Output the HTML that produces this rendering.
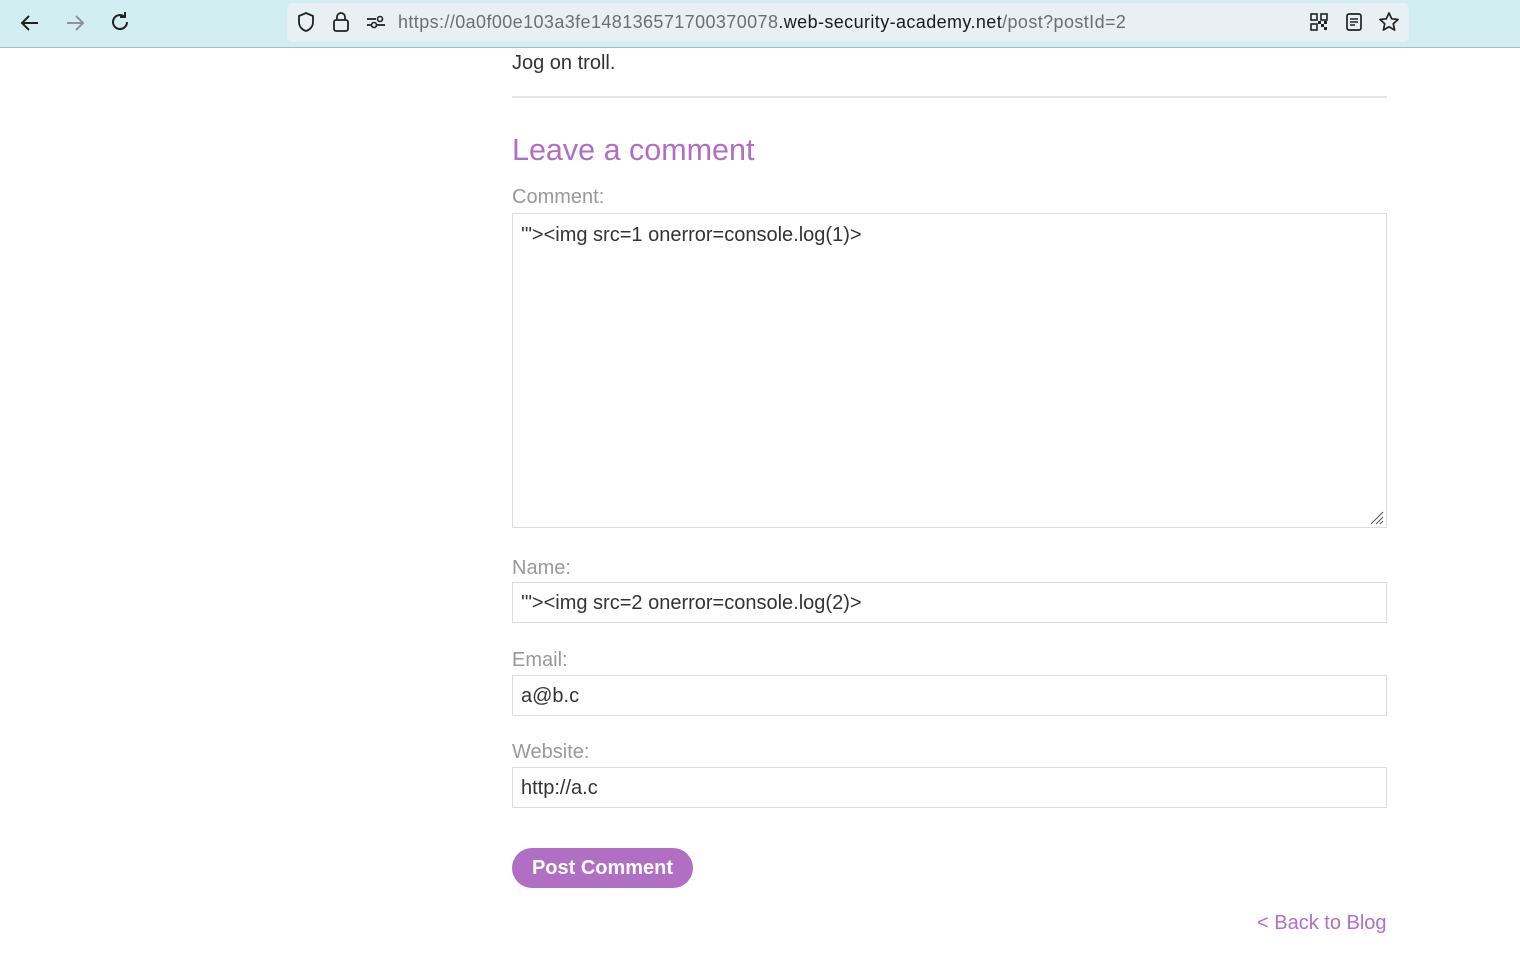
<!DOCTYPE html>
<html><head><meta charset="utf-8">
<style>
*{box-sizing:border-box;margin:0;padding:0}
body{width:1520px;height:957px;overflow:hidden;background:#fff;font-family:"Liberation Sans",Arial,sans-serif;position:relative}
.bar{position:absolute;left:0;top:0;width:1520px;height:48px;background:#d3eef3;border-bottom:1px solid #a9bcc2}
.url{position:absolute;left:287px;top:3px;width:1122px;height:39px;background:#e8f0f6;border-radius:6px}
.urltext{position:absolute;left:398px;top:12px;font-size:18px;color:#6b6f73;letter-spacing:0.4px;white-space:nowrap}
.urltext b{font-weight:normal;color:#1b1b1b}
svg{position:absolute}
.a{position:absolute;font-size:20px}
.lbl{color:#999;font-size:20px;position:absolute;left:512px}
.box{position:absolute;left:512px;width:875px;border:1px solid #ddd;background:#fff;font-size:20px;color:#333;padding-left:8px}
</style></head><body>
<div class="bar">
<svg style="left:18px;top:12px" width="24" height="22" viewBox="0 0 24 22"><path d="M20 11H4M11 4l-7 7 7 7" fill="none" stroke="#222" stroke-width="2"/></svg>
<svg style="left:63px;top:12px" width="24" height="22" viewBox="0 0 24 22"><path d="M4 11h16M13 4l7 7-7 7" fill="none" stroke="#8a9599" stroke-width="2"/></svg>
<svg style="left:109px;top:11px" width="22" height="22" viewBox="0 0 22 22"><path d="M18 11a7 7 0 1 1-3-5.7" fill="none" stroke="#222" stroke-width="2"/><path d="M16 1v5h-5" fill="none" stroke="#222" stroke-width="2"/></svg>
<div class="url"></div>
<svg style="left:296px;top:11px" width="20" height="22" viewBox="0 0 20 22"><path d="M10 2l7 3v6c0 5-3.5 8-7 9-3.5-1-7-4-7-9V5z" fill="none" stroke="#222" stroke-width="1.8"/></svg>
<svg style="left:332px;top:10px" width="18" height="24" viewBox="0 0 18 24"><rect x="2" y="10" width="14" height="11" rx="2" fill="none" stroke="#222" stroke-width="1.8"/><path d="M5 10V7a4 4 0 0 1 8 0v3" fill="none" stroke="#222" stroke-width="1.8"/></svg>
<svg style="left:366px;top:14px" width="20" height="16" viewBox="0 0 20 16"><path d="M1 5h9M1 11h4" stroke="#222" stroke-width="1.8"/><circle cx="14" cy="5" r="2.5" fill="none" stroke="#222" stroke-width="1.6"/><circle cx="8" cy="11" r="2.5" fill="none" stroke="#222" stroke-width="1.6"/><path d="M11 11h8" stroke="#222" stroke-width="1.8"/></svg>
<div class="urltext">https://0a0f00e103a3fe148136571700370078<b>.web-security-academy.net</b>/post?postId=2</div>
<svg style="left:1310px;top:13px" width="18" height="18" viewBox="0 0 18 18"><g fill="none" stroke="#222" stroke-width="1.6"><rect x="1" y="1" width="6" height="6"/><rect x="11" y="1" width="6" height="6"/><rect x="1" y="11" width="6" height="6"/></g><g fill="#222"><rect x="11" y="11" width="3" height="3"/><rect x="14" y="14" width="3" height="3"/><rect x="8" y="8" width="3" height="3"/><rect x="14" y="8" width="3" height="3"/></g></svg>
<svg style="left:1345px;top:12px" width="18" height="20" viewBox="0 0 18 20"><rect x="2" y="2" width="14" height="16" rx="2" fill="none" stroke="#222" stroke-width="1.7"/><path d="M5 7h8M5 10h8M5 13h5" stroke="#222" stroke-width="1.5"/></svg>
<svg style="left:1378px;top:11px" width="22" height="22" viewBox="0 0 22 22"><path d="M11 2l2.7 5.8 6.3.7-4.7 4.3 1.3 6.2L11 15.8 5.4 19l1.3-6.2L2 8.5l6.3-.7z" fill="none" stroke="#222" stroke-width="1.7" stroke-linejoin="round"/></svg>
</div>

<div class="a" style="left:512px;top:52px;color:#333">Jog on troll.</div>
<div style="position:absolute;left:512px;top:96px;width:875px;height:2px;background:#e6e6e6"></div>
<div class="a" style="left:512px;top:133px;font-size:30.5px;color:#b06fc3">Leave a comment</div>
<div class="lbl" style="top:186px">Comment:</div>
<div class="box" style="top:213px;height:315px;padding-top:10px">'"&gt;&lt;img src=1 onerror=console.log(1)&gt;
<svg style="right:2px;bottom:2px" width="16" height="16" viewBox="0 0 16 16"><path d="M15 3L3 15M15 8l-7 7M15 12l-3 3" stroke="#555" stroke-width="1"/></svg></div>
<div class="lbl" style="top:557px">Name:</div>
<div class="box" style="top:582px;height:41px;line-height:41px">'"&gt;&lt;img src=2 onerror=console.log(2)&gt;</div>
<div class="lbl" style="top:649px">Email:</div>
<div class="box" style="top:675px;height:41px;line-height:41px">a@b.c</div>
<div class="lbl" style="top:741px">Website:</div>
<div class="box" style="top:767px;height:41px;line-height:41px">http://a.c</div>
<div style="position:absolute;left:512px;top:848px;width:181px;height:40px;border-radius:20px;background:#b06fc3;color:#fff;font-weight:bold;font-size:20px;text-align:center;line-height:41px">Post Comment</div>
<div class="a" style="left:1257px;top:912px;color:#b06fc3">&lt; Back to Blog</div>
</body></html>
